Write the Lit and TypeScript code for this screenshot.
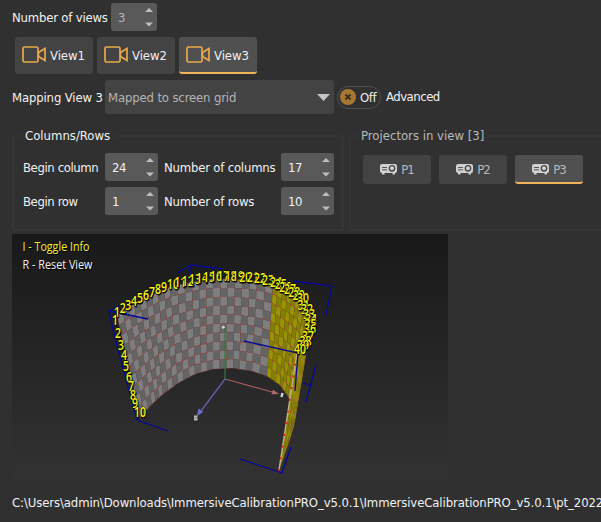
import { LitElement, html, svg, css } from "lit";
import { customElement, property } from "lit/decorators.js";
import { classMap } from "lit/directives/class-map.js";

type Pt = [number, number];
type Knot = [number, number, number];

@customElement("spin-box")
class SpinBox extends LitElement {
  @property() value = "";
  @property({ type: Boolean }) muted = false;
  static styles = css`
    :host { display: block; box-sizing: border-box; height: 28px; background: #595959; border-radius: 3px; color: #f0f0f0; }
    .box { display: flex; height: 28px; align-items: center; justify-content: space-between; padding: 0 4px 0 7px; font-size: 13px; letter-spacing: -0.5px; }
    .box span { padding-top: 2px; }
    .muted { color: #b4b4b4; }
    svg { display: block; }
  `;
  render() {
    return html`<div class=${classMap({ box: true, muted: this.muted })}>
      <span>${this.value}</span>
      <svg width="8" height="20" viewBox="0 0 8 20" fill="#bdbdbd"><path d="M0 5L4 1L8 5ZM0 15.500L4 19.500L8 15.500Z" /></svg>
    </div>`;
  }
}

@customElement("grid-viewport")
class GridViewport extends LitElement {
  static styles = css`
    :host { display: block; width: 436px; height: 244px; background: linear-gradient(#191919, #323232); }
    svg { display: block; }
    .mesh { fill: none; stroke: #a05555; stroke-width: 0.5; stroke-opacity: 0.3; }
    .dots { fill: #e02525; opacity: 0.75; }
    .frame { fill: none; stroke: #08089a; stroke-width: 1.3; }
    .num { font: 600 13.5px "Open Sans", sans-serif; fill: #f4f41c; stroke: #0b0b00; stroke-width: 0.8; paint-order: stroke; text-shadow: 1px 1px 0 #0b0b00; }
    .hint { font: 500 13px "Open Sans", sans-serif; text-shadow: 1px 1px 0 #000; }
  `;

  private readonly top: Knot[] = [
    [0, 117, 315], [3, 134, 304], [6, 152, 295], [9, 170, 287], [12, 192, 282], [15, 213, 279], [18, 235, 279],
    [21, 257, 281], [23, 273, 285], [26, 287, 292], [29, 300, 301], [31, 307, 310], [33, 311, 320], [35, 310, 330],
    [36, 308, 337], [38, 303, 346], [40, 297, 353],
  ];
  private readonly bottom: Knot[] = [
    [0, 140, 417], [3, 152, 404], [6, 163, 394], [9, 178, 383], [12, 195, 374], [15, 213, 369], [18, 233, 368],
    [21, 252, 371], [23, 267, 376], [26, 280, 385], [29, 288, 396], [31, 292, 404], [33, 295, 412], [35, 295, 420],
    [36, 294, 426], [38, 288, 445], [40, 279, 470],
  ];

  private at(knots: Knot[], c: number): Pt {
    let i = 0;
    while (i < knots.length - 2 && knots[i + 1][0] < c) i++;
    const [c0, x0, y0] = knots[i];
    const [c1, x1, y1] = knots[i + 1];
    const t = (c - c0) / (c1 - c0);
    return [x0 + (x1 - x0) * t, y0 + (y1 - y0) * t];
  }

  private node(c: number, r: number): Pt {
    const a = this.at(this.top, c);
    const b = this.at(this.bottom, c);
    const t = r / 10;
    return [+(a[0] + (b[0] - a[0]) * t).toFixed(1), +(a[1] + (b[1] - a[1]) * t).toFixed(1)];
  }

  private columns() {
    const out = [];
    for (let c = 0; c < 40; c++) {
      const on = c >= 23;
      for (let r = 0; r < 10; r++) {
        const even = (c + r) % 2 === 0;
        const pts = [this.node(c, r), this.node(c + 1, r), this.node(c + 1, r + 1), this.node(c, r + 1)];
        const fill = on ? (even ? "#989404" : "#837f00") : even ? "#7e7e7e" : "#646464";
        out.push(svg`<polygon points=${pts.join(" ")} fill=${fill} />`);
      }
      const side: Pt[] = [];
      for (let r = 0; r <= 10; r++) side.push(this.node(c, r));
      const rungs = side.map((p, r) => `M${p}L${this.node(c + 1, r)}`);
      out.push(svg`<path class="mesh" d=${"M" + side.join("L") + rungs.join("")} />`);
      if (c < 33) {
        out.push(...side.map(([x, y]) => svg`<rect class="dots" x=${x - 0.5} y=${y - 0.5} width="1.1" height="1.1" />`));
      }
    }
    return out;
  }

  private num(n: number, x: number, y: number) {
    const w = n > 9 ? 12 : 6;
    return svg`<text class="num" x=${x - w / 2} y=${y} textLength=${w} lengthAdjust="spacingAndGlyphs">${n}</text>`;
  }

  render() {
    const colNums = Array.from({ length: 40 }, (_, i) => {
      const [x, y] = this.at(this.top, i);
      const shift = i < 9 ? 0 : i < 30 ? 3 : 0;
      return this.num(i + 1, x + shift, y + (i < 30 ? 2 : 4));
    });
    const rowPos: Pt[] = [[115, 325], [118, 338], [121, 350], [124, 360], [126, 371], [129, 382], [131, 391], [133, 400], [135, 408], [140, 417]];
    const front = Array.from({ length: 11 }, (_, r) => this.node(40, r));
    return html`<svg width="436" height="244" viewBox="12 234 436 244">
      <path class="frame" d="M124 303L109 311L116 342L137 420L168 431M177 273L191 265V276M191 265L222 269M293 281L332 286L326 315M316 365L306 402M303 383L312 386M240 459L282 473L291 447" />
      ${this.columns()}
      <path d="M297 353L279 470" stroke="#bdb488" stroke-width="1.4" />
      ${front.map(([x, y]) => svg`<circle cx=${x} cy=${y} r="1.1" fill="#f01818" />`)}
      <path class="frame" d="M109 311L148 319M244 341L298 353L295 391" />
      <path d="M225 379V328" stroke="#30783c" stroke-width="1.2" />
      <path d="M225 379L274 392.500" stroke="#a85b60" stroke-width="1.2" />
      <path d="M279 394L271.500 394.300L273 389.700Z" fill="#b56a70" />
      <path d="M225 379L201 411" stroke="#5d5da8" stroke-width="1.4" />
      <path d="M197 416L198.500 408.500L203.300 412Z" fill="#6e6ec4" />
      <path d="M222 328L224.500 326.500M281.500 397L282.500 393" stroke="#d5d5d5" stroke-width="2.4" />
      <rect x="194" y="415.500" width="3.500" height="5" fill="#bababa" />
      <path d="M194.500 418H197" stroke="#555" stroke-width=".7" />
      ${colNums}
      ${rowPos.map(([x, y], i) => this.num(i + 1, x, y))}
      <text class="hint" x="22.500" y="251" fill="#f3f334" textLength="67" lengthAdjust="spacingAndGlyphs">I - Toggle Info</text>
      <text class="hint" x="22.500" y="269" fill="#f2f2f2" textLength="70" lengthAdjust="spacingAndGlyphs">R - Reset View</text>
    </svg>`;
  }
}

@customElement("app-root")
class AppRoot extends LitElement {
  static styles = css`
    :host { display: block; width: 601px; height: 522px; overflow: hidden; background: #303030; color: #f0f0f0; font: 13px/16px "DejaVu Sans Condensed", "DejaVu Sans", sans-serif; font-stretch: condensed; white-space: nowrap; }
    * { box-sizing: border-box; }
    svg { display: block; flex: none; }
    .page { display: flex; flex-direction: column; padding: 3px 0 0 12px; }
    .row { display: flex; align-items: center; }
    .count { height: 28px; }
    .count .cap { width: 99px; padding-top: 1px; letter-spacing: -0.2px; }
    .count spin-box { width: 46px; }
    .views { gap: 4px; margin: 6px 0 0 3px; }
    .view { display: flex; align-items: center; gap: 4px; width: 78px; height: 37px; padding: 0 0 0 7px; background: #434343; border-radius: 3px; border-bottom: 2px solid #434343; letter-spacing: -0.05px; }
    .view span { padding-top: 3px; }
    .on { background: #505050; border-bottom-color: #f0b35a; }
    .mapping { height: 34px; margin-top: 6px; }
    .mapping .cap { width: 93px; padding-top: 2px; letter-spacing: -0.15px; }
    .combo { display: flex; align-items: center; justify-content: space-between; width: 229px; height: 34px; padding: 0 4px 0 3px; border-radius: 3px; background: #434343; color: #b4b4b4; letter-spacing: -0.15px; }
    .combo span { padding-top: 2px; }
    .toggle { display: flex; align-items: center; gap: 4px; width: 44px; height: 23px; margin: 0 5px 0 3px; padding-left: 2px; border: 1px solid #505050; border-radius: 12px; letter-spacing: -0.4px; }
    .toggle span { padding-top: 1px; }
    .adv { letter-spacing: -0.5px; }
    .groups { display: flex; gap: 5px; margin-top: 14px; height: 102px; }
    fieldset { flex: none; margin: 0; min-width: 0; height: 103px; border: 2px solid #353535; border-radius: 4px; }
    legend { line-height: 16px; padding: 0 4px; }
    .grid { width: 332px; padding: 9px 0 0 9px; }
    .grid legend { letter-spacing: 0; margin-left: -2px; }
    .cells { display: grid; grid-template-columns: 82px 53px 6px 117px 53px; row-gap: 6px; align-items: center; letter-spacing: -0.4px; }
    .cells span { padding-top: 2px; }
    .cells .second { grid-column: 4; letter-spacing: -0.2px; }
    .proj { width: 270px; padding: 11px 0 0 12px; color: #b8b8b8; }
    .proj legend { margin-left: -6px; }
    .plist { display: flex; gap: 8px; }
    .p { display: flex; align-items: center; justify-content: center; gap: 4px; width: 68px; height: 29px; border-radius: 3px; background: #434343; border-bottom: 2px solid #434343; letter-spacing: -0.9px; }
    .p span { padding-top: 2px; }
    .p.on { background: #505050; border-bottom-color: #f0b35a; }
    grid-viewport { margin-top: 4px; }
    .path { margin-top: 17px; letter-spacing: -0.11px; }
  `;

  private camera() {
    return html`<svg width="24" height="17" viewBox="0 0 24 17" fill="none" stroke="#e9a94b" stroke-width="1.7">
      <rect x="1" y="1" width="15" height="15" rx="1.500" /><path d="M23 2.500L16.500 6.500V10.500L23 14.500Z" />
    </svg>`;
  }

  private projector() {
    return html`<svg width="17" height="12" viewBox="0 0 17 12">
      <path d="M2 1H15Q17 1 17 3V8Q17 10 15 10V11.500H12.500V10H4.500V11.500H2V10Q0 10 0 8V3Q0 1 2 1Z" fill="#d0d0d0" />
      <path d="M2 4.500H7M2 6.800H7" stroke="#555" stroke-width="1" />
      <circle cx="12" cy="5.300" r="2.700" fill="#d0d0d0" stroke="#434343" stroke-width="1.300" />
    </svg>`;
  }

  render() {
    return html`<div class="page">
      <div class="row count"><span class="cap">Number of views</span><spin-box value="3" muted></spin-box></div>
      <div class="row views">
        ${[1, 2, 3].map((n) => html`<div class=${classMap({ view: true, on: n === 3 })}>${this.camera()}<span>View${n}</span></div>`)}
      </div>
      <div class="row mapping">
        <span class="cap">Mapping View 3</span>
        <div class="combo"><span>Mapped to screen grid</span><svg width="13" height="7" viewBox="0 0 13 7"><path d="M0 0H13L6.500 7Z" fill="#c6c6c6" /></svg></div>
        <div class="toggle">
          <svg width="16" height="16" viewBox="0 0 16 16"><circle cx="8" cy="8" r="8" fill="#a87832" /><path d="M5.500 5.500L10.500 10.500M10.500 5.500L5.500 10.500" stroke="#3b301f" stroke-width="2" /></svg>
          <span>Off</span>
        </div>
        <span class="adv">Advanced</span>
      </div>
      <div class="groups">
        <fieldset class="grid">
          <legend>Columns/Rows</legend>
          <div class="cells">
            <span>Begin column</span><spin-box value="24"></spin-box><span class="second">Number of columns</span><spin-box value="17"></spin-box>
            <span>Begin row</span><spin-box value="1"></spin-box><span class="second">Number of rows</span><spin-box value="10"></spin-box>
          </div>
        </fieldset>
        <fieldset class="proj">
          <legend>Projectors in view [3]</legend>
          <div class="plist">
            ${[1, 2, 3].map((n) => html`<div class=${classMap({ p: true, on: n === 3 })}>${this.projector()}<span>P${n}</span></div>`)}
          </div>
        </fieldset>
      </div>
      <grid-viewport></grid-viewport>
      <div class="path">C:\\Users\\admin\\Downloads\\ImmersiveCalibrationPRO_v5.0.1\\ImmersiveCalibrationPRO_v5.0.1\\pt_2022</div>
    </div>`;
  }
}
